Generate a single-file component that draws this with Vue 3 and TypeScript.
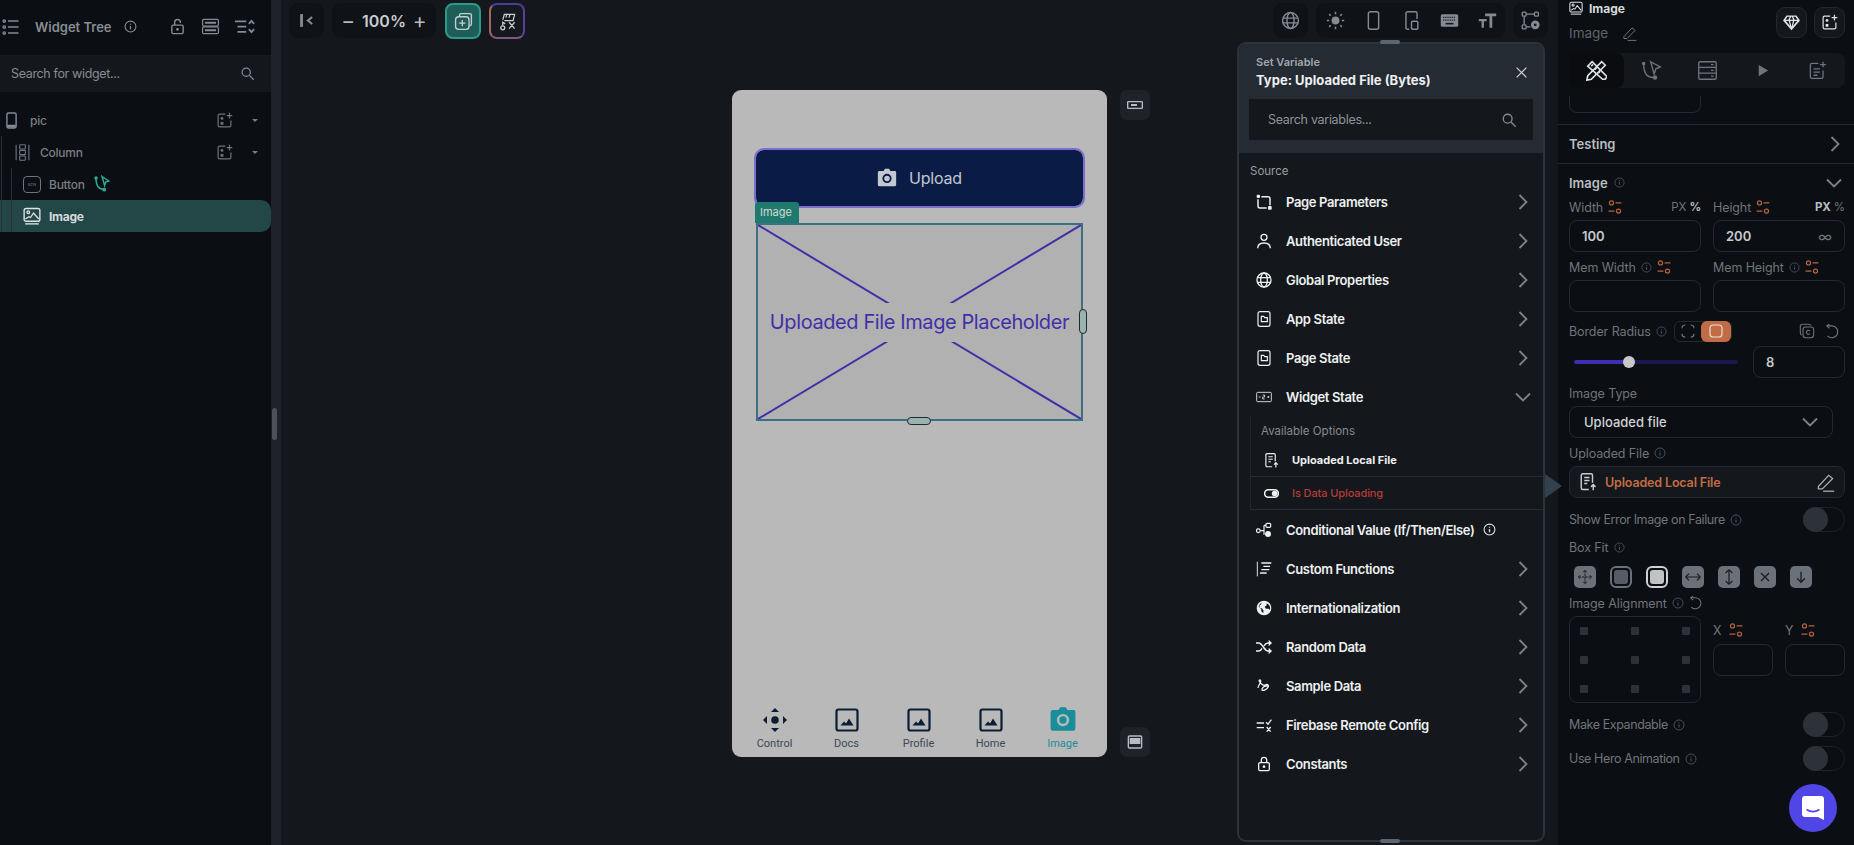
<script setup lang="ts">
const navItems = [
  { label: 'Docs', icon: 'navimg' },
  { label: 'Profile', icon: 'navimg' },
  { label: 'Home', icon: 'navimg' },
]
const sourcesTop = [
  { label: 'Page Parameters', icon: 'params' },
  { label: 'Authenticated User', icon: 'user' },
  { label: 'Global Properties', icon: 'globe' },
  { label: 'App State', icon: 'state' },
  { label: 'Page State', icon: 'state' },
]
const sourcesBottom = [
  { label: 'Custom Functions', icon: 'funcs' },
  { label: 'Internationalization', icon: 'intl' },
  { label: 'Random Data', icon: 'shuffle' },
  { label: 'Sample Data', icon: 'sample' },
  { label: 'Firebase Remote Config', icon: 'remote' },
  { label: 'Constants', icon: 'lockc' },
]
const fits = ['move', 'inner', 'inner', 'hz', 'vt', 'x', 'down']
const dots = Array.from({ length: 9 }, (_, i) => i)
</script>

<template>
  <div class="app">
    <svg class="sprite" width="0" height="0" aria-hidden="true">
      <defs>
        <symbol id="info" viewBox="0 0 24 24"><circle cx="12" cy="12" r="10" fill="none" stroke="currentColor" stroke-width="2"/><path d="M12 11v6M12 7v1.6" stroke="currentColor" stroke-width="2.4" fill="none"/></symbol>
        <symbol id="tree" viewBox="0 0 24 24"><g fill="none" stroke="currentColor" stroke-width="1.8"><circle cx="3" cy="4" r="1.6"/><circle cx="3" cy="12" r="1.6"/><circle cx="3" cy="20" r="1.6"/><path d="M8 4h14M8 12h14M8 20h14"/></g></symbol>
        <symbol id="lock" viewBox="0 0 24 24"><g fill="none" stroke="currentColor" stroke-width="2"><rect x="4" y="10" width="16" height="12" rx="2"/><path d="M8 10V6a4 4 0 0 1 8 0v1"/></g><circle cx="12" cy="16" r="2" fill="currentColor"/></symbol>
        <symbol id="lockc" viewBox="0 0 24 24"><g fill="none" stroke="currentColor" stroke-width="2"><rect x="4" y="10" width="16" height="12" rx="2"/><path d="M8 10V6a4 4 0 0 1 8 0v4"/></g><circle cx="12" cy="16" r="2" fill="currentColor"/></symbol>
        <symbol id="stack" viewBox="0 0 24 24"><g fill="none" stroke="currentColor" stroke-width="1.6"><rect x="2" y="3" width="20" height="8.4" rx="1.5"/><rect x="2" y="12.6" width="20" height="8.4" rx="1.5"/></g><path d="M5 6h14v2.5H5zM5 15.5h14V18H5z" fill="currentColor"/></symbol>
        <symbol id="sort" viewBox="0 0 24 24"><g fill="none" stroke="currentColor" stroke-width="2"><path d="M1 6h13M4 12h10M4 18h10M17 9l3-3.5L23 9M17 15l3 3.5 3-3.5"/></g></symbol>
        <symbol id="search" viewBox="0 0 24 24"><g fill="none" stroke="currentColor" stroke-width="2"><circle cx="10" cy="10" r="6.6"/><path d="M15 15l7 7"/></g></symbol>
        <symbol id="phone" viewBox="0 0 24 24"><rect x="5.5" y="1.5" width="13" height="21" rx="2" fill="none" stroke="currentColor" stroke-width="2"/><path d="M6 18h12v4H6z" fill="currentColor"/></symbol>
        <symbol id="addw" viewBox="0 0 24 24"><g fill="none" stroke="currentColor" stroke-width="1.7"><path d="M13 3H5a2 2 0 0 0-2 2v14a2 2 0 0 0 2 2h14a2 2 0 0 0 2-2v-7"/><path d="M19 1v8M15 5h8"/></g><g fill="currentColor"><rect x="6.5" y="7" width="4" height="4" rx="2"/><rect x="6.5" y="14" width="4" height="4" rx=".6"/></g></symbol>
        <symbol id="column" viewBox="0 0 24 24"><g fill="none" stroke="currentColor" stroke-width="1.6"><path d="M3 1v22M21 1v22"/><rect x="8" y="1" width="8" height="6" rx="1"/><rect x="8" y="9" width="8" height="6" rx="1"/><rect x="8" y="17" width="8" height="6" rx="1"/></g></symbol>
        <symbol id="img" viewBox="0 0 24 24"><g fill="none" stroke="currentColor" stroke-width="1.8"><rect x="1.5" y="2" width="21" height="17" rx="2.5"/><circle cx="7" cy="7" r="1.8"/><path d="M3 16l5-3 2 1 4-6 7 8"/><path d="M3 22.5h18"/></g></symbol>
        <symbol id="flow" viewBox="0 0 24 24"><g fill="none" stroke="currentColor" stroke-width="2"><path d="M4 4c0 9 2 15 10 15"/><path d="M12 2l9 6-4 1.5L15.5 14z"/></g><g fill="currentColor"><circle cx="4" cy="4" r="2.4"/><circle cx="15" cy="19.5" r="2.6"/></g></symbol>
        <symbol id="collapse" viewBox="0 0 24 24"><path d="M3 3h4v18H3z" fill="currentColor"/><path d="M20 7l-6 5 6 5" fill="none" stroke="currentColor" stroke-width="3"/></symbol>
        <symbol id="addpage" viewBox="0 0 24 24"><g fill="none" stroke="currentColor" stroke-width="1.7"><path d="M7 5V4a2 2 0 0 1 2-2h11a2 2 0 0 1 2 2v11a2 2 0 0 1-2 2h-1"/><rect x="2" y="6" width="17" height="16" rx="4"/><path d="M10.5 10v8M6.5 14h8"/></g></symbol>
        <symbol id="tools" viewBox="0 0 24 24"><g fill="none" stroke="currentColor" stroke-width="1.6"><path d="M6 10L8 3h13l-2 8H8"/><path d="M11 3l-1 4M15 3l-1 4"/><circle cx="6" cy="20" r="2.5"/><path d="M6 17v-4l3 2M14 13l7 8M21 13l-7 8"/></g></symbol>
        <symbol id="gl" viewBox="0 0 24 24"><g fill="none" stroke="currentColor" stroke-width="1.8"><circle cx="12" cy="12" r="10"/><ellipse cx="12" cy="12" rx="4.5" ry="10"/><path d="M2.5 9h19M2.5 15h19"/></g></symbol>
        <symbol id="sun" viewBox="0 0 24 24"><circle cx="12" cy="12" r="5" fill="currentColor"/><path d="M12 1v3M12 20v3M1 12h3M20 12h3M4 4l2 2M18 18l2 2M20 4l-2 2M6 18l-2 2" stroke="currentColor" stroke-width="2" fill="none"/></symbol>
        <symbol id="phone2" viewBox="0 0 24 24"><rect x="5.5" y="1" width="13" height="22" rx="2.5" fill="none" stroke="currentColor" stroke-width="1.8"/></symbol>
        <symbol id="tablet" viewBox="0 0 24 24"><g fill="none" stroke="currentColor" stroke-width="1.8"><path d="M9 23H7a2 2 0 0 1-2-2V3a2 2 0 0 1 2-2h10a2 2 0 0 1 2 2v7"/><rect x="12" y="13" width="8" height="10" rx="1.5"/></g></symbol>
        <symbol id="kbd" viewBox="0 0 24 24"><rect x="1" y="4" width="22" height="16" rx="2" fill="currentColor"/><path d="M4 8h16M4 11.5h16" stroke="#14181c" stroke-width="1.5" stroke-dasharray="1.5 1.2"/><path d="M7 16h10" stroke="#14181c" stroke-width="2"/></symbol>
        <symbol id="tt" viewBox="0 0 24 24"><path d="M1 10h10v3H7.5v8h-3v-8H1zM9 3h14v3.5h-5V21h-3.5V6.500H9z" fill="currentColor"/></symbol>
        <symbol id="graph" viewBox="0 0 24 24"><g fill="none" stroke="currentColor" stroke-width="1.7"><rect x="1.5" y="1.5" width="5" height="5" rx="1.5"/><rect x="17" y="1.5" width="5" height="5" rx="1.5"/><rect x="1.5" y="17.5" width="5" height="5" rx="1.5"/><path d="M7 4h10M4 7v10M7 20h5"/></g><circle cx="18" cy="17.5" r="5.5" fill="currentColor"/><circle cx="18" cy="17.5" r="1.8" fill="#14181c"/></symbol>
        <symbol id="minibar" viewBox="0 0 24 24"><rect x="1" y="7" width="22" height="10" rx="1" fill="none" stroke="currentColor" stroke-width="2"/><path d="M6 10.5h9v3H6z" fill="currentColor"/></symbol>
        <symbol id="minilap" viewBox="0 0 24 24"><rect x="2" y="3" width="20" height="18" rx="1.5" fill="none" stroke="currentColor" stroke-width="2"/><path d="M4 6h16v9H4z" fill="currentColor"/></symbol>
        <symbol id="camera" viewBox="0 0 24 24"><path fill-rule="evenodd" d="M8 3.5L9.5 1h5L16 3.5h6a2 2 0 0 1 1 1.5v15a2 2 0 0 1-2 2H3a2 2 0 0 1-2-2V5a2 2 0 0 1 2-1.5zM12 7a5.5 5.5 0 1 0 0 11 5.5 5.5 0 0 0 0-11zm0 2.2a3.3 3.3 0 1 1 0 6.6 3.3 3.3 0 0 1 0-6.6z" fill="currentColor"/></symbol>
        <symbol id="navimg" viewBox="0 0 24 24"><rect x="1.5" y="1.5" width="21" height="21" rx="2" fill="none" stroke="currentColor" stroke-width="2.2"/><path d="M5.5 17.5l3.5-4 2 2 3-5 4.5 7z" fill="currentColor"/></symbol>
        <symbol id="dpad" viewBox="0 0 24 24"><g fill="currentColor"><circle cx="12" cy="12" r="3.8"/><path d="M12 0l4 4H8zM12 24l-4-4h8zM0 12l4-4v8zM24 12l-4 4V8z"/></g></symbol>
        <symbol id="params" viewBox="0 0 24 24"><g fill="none" stroke="currentColor" stroke-width="2.2"><path d="M8 4h10a3 3 0 0 1 3 3v10"/><path d="M3 8v10a3 3 0 0 0 3 3h10"/></g><rect x="1" y="1" width="5" height="5" rx="1.5" fill="currentColor"/><rect x="18" y="18" width="5.500" height="5.500" rx="1" fill="currentColor"/></symbol>
        <symbol id="user" viewBox="0 0 24 24"><g fill="none" stroke="currentColor" stroke-width="2"><circle cx="12" cy="6.5" r="4.5"/><path d="M2.5 23c0-5 4-8 9.5-8s9.5 3 9.5 8"/></g></symbol>
        <symbol id="globe" viewBox="0 0 24 24"><g fill="none" stroke="currentColor" stroke-width="2"><circle cx="12" cy="12" r="10.5"/><ellipse cx="12" cy="12" rx="5" ry="10.5"/><path d="M2 8.5h20M2 15.5h20"/></g></symbol>
        <symbol id="state" viewBox="0 0 24 24"><g fill="none" stroke="currentColor" stroke-width="1.8"><rect x="3" y="1" width="18" height="22" rx="3"/><path d="M8 8h3.5l1.5 2h4v6H8z"/></g></symbol>
        <symbol id="counter" viewBox="0 0 24 24"><rect x="1" y="5" width="22" height="14" rx="1.5" fill="none" stroke="currentColor" stroke-width="1.3"/><path d="M4 12h3M10 9h3v3h-3v3h3M17 12h3M18.5 10.5v3" fill="none" stroke="currentColor" stroke-width="1.2"/></symbol>
        <symbol id="fileup" viewBox="0 0 24 24"><g fill="none" stroke="currentColor" stroke-width="1.9"><path d="M13 22H5a2 2 0 0 1-2-2V3a2 2 0 0 1 2-2h11a2 2 0 0 1 2 2v10"/><path d="M7 6h7M7 10h7M7 14h4M19 23v-7M16 18.5l3-3 3 3"/></g></symbol>
        <symbol id="toggle" viewBox="0 0 24 24"><rect x="1" y="6" width="22" height="12" rx="6" fill="none" stroke="currentColor" stroke-width="2.5"/><circle cx="17" cy="12" r="4.5" fill="currentColor"/></symbol>
        <symbol id="cond" viewBox="0 0 24 24"><g fill="none" stroke="currentColor" stroke-width="1.8"><circle cx="3.5" cy="13" r="2.8"/><rect x="15" y="2" width="7" height="6" rx="1.5"/><path d="M6 13h6M12 5h3M12 5v14"/></g><circle cx="18" cy="18" r="4.5" fill="currentColor"/></symbol>
        <symbol id="funcs" viewBox="0 0 24 24"><g fill="none" stroke="currentColor" stroke-width="2"><path d="M2 1v22" stroke-width="1.4"/><path d="M8 3h15M11 8h10M8 13h12M6 18h10"/></g></symbol>
        <symbol id="intl" viewBox="0 0 24 24"><path fill-rule="evenodd" d="M12 1a11 11 0 1 1 0 22 11 11 0 0 1 0-22zM4 10l4 4v3l3 3v-5l-3-3H6l-1-3 3-3V4a9 9 0 0 0-4 6zm12-5v3l-3 2 2 3h4l2 2a9 9 0 0 0-5-10z" fill="currentColor"/></symbol>
        <symbol id="shuffle" viewBox="0 0 24 24"><g fill="none" stroke="currentColor" stroke-width="2.3"><path d="M0 6h4c6 0 8 12 14 12h3M0 18h4c2.5 0 4-2 5-4M12 10c1.5-2 3-4 6-4h3"/></g><path d="M19 1l5 5-5 5zM19 13l5 5-5 5z" fill="currentColor"/></symbol>
        <symbol id="sample" viewBox="0 0 24 24"><path d="M3 15c0-4 5-8 4-11-.8-2-3-.5-2 1 2 3 6 8 10 5 2-1 5 1 3 4-2 3-7 6-9 4-1-2 3-6 6-6l4-1" fill="none" stroke="currentColor" stroke-width="2"/></symbol>
        <symbol id="remote" viewBox="0 0 24 24"><g fill="none" stroke="currentColor" stroke-width="2"><path d="M1 9h11M1 16h11M15 8l3 3 5-7M16 15l6 7M22 15l-6 7"/></g></symbol>
        <symbol id="close" viewBox="0 0 24 24"><path d="M3 3l18 18M21 3L3 21" fill="none" stroke="currentColor" stroke-width="2.3"/></symbol>
        <symbol id="chev" viewBox="0 0 10 16"><path d="M1.5 1l7 7-7 7" fill="none" stroke="currentColor" stroke-width="1.8"/></symbol>
        <symbol id="chevd" viewBox="0 0 16 10"><path d="M1 1.5l7 7 7-7" fill="none" stroke="currentColor" stroke-width="1.8"/></symbol>
        <symbol id="pencil" viewBox="0 0 24 24"><g fill="none" stroke="currentColor" stroke-width="1.6"><path d="M3 17L16 3l5 4L8 20H3z"/><path d="M9 23h14"/></g></symbol>
        <symbol id="gem" viewBox="0 0 24 24"><path fill-rule="evenodd" d="M5 2h14l5 7-12 14L0 9zM6.500 4L3.500 8h4l2-4zM14.500 4l2 4h4l-3-4zM11.500 4l-1.800 4h4.600l-1.800-4zM4 10l6 7-2-7zM10 10l2 8 2-8zM16 10l-2 7 6-7z" fill="currentColor"/></symbol>
        <symbol id="wrench" viewBox="0 0 24 24"><g fill="none" stroke="currentColor" stroke-width="1.9"><path d="M2 7l5-5 17 17-2 3h-3z"/><path d="M6 7l2-2M10 11l2-2M14 15l2-2"/><path d="M18 2l4 4L6 22l-5 1 1-5z"/></g></symbol>
        <symbol id="tflow" viewBox="0 0 24 24"><g fill="none" stroke="currentColor" stroke-width="1.6"><path d="M3 4c0 9 3 16 11 16"/><path d="M11 2l11 6-5 2-2 6z"/></g><g fill="currentColor"><circle cx="3" cy="4" r="2"/><circle cx="16" cy="20" r="2.5"/></g></symbol>
        <symbol id="servers" viewBox="0 0 24 24"><g fill="none" stroke="currentColor" stroke-width="1.5"><rect x="2" y="2" width="20" height="20" rx="1.5"/><path d="M2 8.5h20M2 15h20M16 5.3h3M16 11.8h3M16 18.5h3"/></g></symbol>
        <symbol id="play" viewBox="0 0 24 24"><path d="M6 3l15 9-15 9z" fill="currentColor"/></symbol>
        <symbol id="noteadd" viewBox="0 0 24 24"><g fill="none" stroke="currentColor" stroke-width="1.6"><path d="M13 3H5a2 2 0 0 0-2 2v15a2 2 0 0 0 2 2h12a2 2 0 0 0 2-2v-8"/><path d="M19 1v7M15.5 4.5h7M7 10h8M7 14h8M7 18h5"/></g></symbol>
        <symbol id="vars" viewBox="0 0 24 24"><g fill="none" stroke="currentColor" stroke-width="2"><circle cx="6" cy="5" r="3.5"/><circle cx="18" cy="19" r="3.5"/><path d="M13 5h10M1 19h10"/></g></symbol>
        <symbol id="corners" viewBox="0 0 24 24"><path d="M3 8a5 5 0 0 1 5-5M16 3a5 5 0 0 1 5 5M21 16a5 5 0 0 1-5 5M8 21a5 5 0 0 1-5-5" fill="none" stroke="currentColor" stroke-width="1.8"/></symbol>
        <symbol id="rr" viewBox="0 0 24 24"><rect x="3" y="3" width="18" height="18" rx="5" fill="none" stroke="currentColor" stroke-width="1.8"/></symbol>
        <symbol id="copyc" viewBox="0 0 24 24"><g fill="none" stroke="currentColor" stroke-width="1.6"><path d="M4 18a3 3 0 0 1-2-3V5a3 3 0 0 1 3-3h10a3 3 0 0 1 3 2"/><rect x="6" y="6" width="16" height="16" rx="4"/><path d="M16.5 12a3 3 0 1 0 0 4"/></g></symbol>
        <symbol id="undo" viewBox="0 0 24 24"><g fill="none" stroke="currentColor" stroke-width="1.8"><path d="M3 3h8a9.5 9.5 0 1 1-7 16"/><path d="M7 0L3 3l4 4"/></g></symbol>
        <symbol id="move" viewBox="0 0 24 24"><path d="M12 2v20M2 12h20M12 2L9 5M12 2l3 3M12 22l-3-3M12 22l3-3M2 12l3-3M2 12l3 3M22 12l-3-3M22 12l-3 3" fill="none" stroke="currentColor" stroke-width="1.5" stroke-dasharray="4 1"/></symbol>
        <symbol id="hz" viewBox="0 0 24 24"><path d="M1 12h22M1 12l5-5M1 12l5 5M23 12l-5-5M23 12l-5 5" fill="none" stroke="currentColor" stroke-width="1.8"/></symbol>
        <symbol id="vt" viewBox="0 0 24 24"><path d="M12 1v22M12 1L7 6M12 1l5 5M12 23l-5-5M12 23l5-5" fill="none" stroke="currentColor" stroke-width="1.8"/></symbol>
        <symbol id="x" viewBox="0 0 24 24"><path d="M6 6l12 12M18 6L6 18" fill="none" stroke="currentColor" stroke-width="2"/></symbol>
        <symbol id="down" viewBox="0 0 24 24"><path d="M12 4v16M6 14l6 6 6-6" fill="none" stroke="currentColor" stroke-width="2"/></symbol>
      </defs>
    </svg>

    <aside class="tree">
      <header class="tree-head">
        <svg class="i18 ic-a"><use href="#tree" /></svg>
        <span class="tree-title">Widget Tree</span>
        <svg class="i13 ic-a info-t"><use href="#info" /></svg>
        <svg class="i17 ic-a lock-t"><use href="#lock" /></svg>
        <svg class="i19 ic-a stack-t"><use href="#stack" /></svg>
        <svg class="i21 ic-a sort-t"><use href="#sort" /></svg>
      </header>
      <div class="tree-search">
        <span>Search for widget...</span>
        <svg class="i15 ic-a"><use href="#search" /></svg>
      </div>
      <div class="tree-list">
        <div class="trow r0">
          <svg class="i17 ic-a"><use href="#phone" /></svg>
          <span class="tname n0">pic</span>
          <svg class="i17 ic-b addw"><use href="#addw" /></svg>
          <i class="caret"></i>
        </div>
        <div class="trow r1">
          <svg class="i17 ic-b"><use href="#column" /></svg>
          <span class="tname n1">Column</span>
          <svg class="i17 ic-b addw"><use href="#addw" /></svg>
          <i class="caret"></i>
        </div>
        <div class="trow r2">
          <span class="btn-ico">BTN</span>
          <span class="tname">Button</span>
          <svg class="i18 teal flow-i"><use href="#flow" /></svg>
        </div>
        <div class="trow r2 active">
          <svg class="i18 white-i"><use href="#img" /></svg>
          <span class="tname bold">Image</span>
        </div>
        <i class="vl v1"></i>
        <i class="vl v2"></i>
      </div>
    </aside>

    <div class="gutter"><i class="grip"></i></div>

    <main class="canvas">
      <div class="toolbar">
        <div class="tb-group tb-collapse"><svg class="i17 ic-a"><use href="#collapse" /></svg></div>
        <div class="tb-group tb-zoom">
          <span class="pm">−</span><span class="pct">100%</span><span class="pm">+</span>
        </div>
        <div class="tb-square green"><svg class="i19 ic-c"><use href="#addpage" /></svg></div>
        <div class="tb-square grad"><svg class="i19 ic-c"><use href="#tools" /></svg></div>
        <div class="tb-spacer"></div>
        <div class="tb-group tb-one"><svg class="i19 ic-a"><use href="#gl" /></svg></div>
        <div class="tb-group tb-mid">
          <svg class="i19 ic-a"><use href="#sun" /></svg>
          <svg class="i19 ic-a"><use href="#phone2" /></svg>
          <svg class="i19 ic-a"><use href="#tablet" /></svg>
          <svg class="i19 ic-a"><use href="#kbd" /></svg>
          <svg class="i19 ic-a"><use href="#tt" /></svg>
        </div>
        <div class="tb-group tb-one"><svg class="i19 ic-a"><use href="#graph" /></svg></div>
      </div>

      <div class="stage">
        <section class="phone">
          <div class="up-btn">
            <svg class="i20"><use href="#camera" /></svg>
            <span>Upload</span>
          </div>
          <div class="img-box">
            <span class="img-tag">Image</span>
            <svg class="cross" viewBox="0 0 322 194" preserveAspectRatio="none">
              <path d="M0 0L322 194M322 0L0 194" stroke="#4030a8" stroke-width="2" fill="none" />
            </svg>
            <span class="ph-text">Uploaded File Image Placeholder</span>
            <i class="h-right"></i>
            <i class="h-bottom"></i>
          </div>
          <nav class="navbar">
            <div class="nav-item">
              <svg class="i24"><use href="#dpad" /></svg>
              <span>Control</span>
            </div>
            <div v-for="n in navItems" :key="n.label" class="nav-item">
              <svg class="i24"><use :href="'#' + n.icon" /></svg>
              <span>{{ n.label }}</span>
            </div>
            <div class="nav-item on">
              <svg class="i28"><use href="#camera" /></svg>
              <span>Image</span>
            </div>
          </nav>
        </section>
        <div class="side">
          <div class="side-btn"><svg class="i16"><use href="#minibar" /></svg></div>
          <div class="side-btn"><svg class="i16"><use href="#minilap" /></svg></div>
        </div>
      </div>

      <section class="popup">
        <i class="pop-grip top"></i>
        <i class="pop-grip bot"></i>
        <header class="pop-head">
          <div class="pop-titles">
            <div>
              <div class="pop-sub">Set Variable</div>
              <div class="pop-type">Type: Uploaded File (Bytes)</div>
            </div>
            <svg class="i13 ic-close"><use href="#close" /></svg>
          </div>
          <div class="pop-search">
            <span>Search variables...</span>
            <svg class="i16 ic-a"><use href="#search" /></svg>
          </div>
        </header>
        <div class="pop-body">
          <div class="src-label">Source</div>
          <div v-for="s in sourcesTop" :key="s.label" class="src">
            <svg class="i16"><use :href="'#' + s.icon" /></svg>
            <span>{{ s.label }}</span>
            <svg class="chev"><use href="#chev" /></svg>
          </div>
          <div class="src">
            <svg class="i16"><use href="#counter" /></svg>
            <span>Widget State</span>
            <svg class="chevd"><use href="#chevd" /></svg>
          </div>
          <div class="opts">
            <div class="opt-title">Available Options</div>
            <div class="opt first">
              <svg class="i15"><use href="#fileup" /></svg>
              <span>Uploaded Local File</span>
            </div>
            <div class="opt red">
              <svg class="i15 tog"><use href="#toggle" /></svg>
              <span>Is Data Uploading</span>
            </div>
          </div>
          <div class="src cond">
            <svg class="i16"><use href="#cond" /></svg>
            <span>Conditional Value (If/Then/Else)</span>
            <svg class="i13 cinfo"><use href="#info" /></svg>
          </div>
          <div v-for="s in sourcesBottom" :key="s.label" class="src">
            <svg class="i16"><use :href="'#' + s.icon" /></svg>
            <span>{{ s.label }}</span>
            <svg class="chev"><use href="#chev" /></svg>
          </div>
        </div>
      </section>
      <i class="pointer"></i>
    </main>

    <aside class="props">
      <header class="p-head">
        <div>
          <div class="p-kind"><svg class="i14 white-i"><use href="#img" /></svg><b>Image</b></div>
          <div class="p-name"><span>Image</span><svg class="i15 ic-b"><use href="#pencil" /></svg></div>
        </div>
        <div class="p-acts">
          <div class="p-act"><svg class="i17 white-i"><use href="#gem" /></svg></div>
          <div class="p-act"><svg class="i17 white-i"><use href="#addw" /></svg></div>
        </div>
      </header>
      <div class="tabs">
        <div class="tab on"><svg class="i21 white-i"><use href="#wrench" /></svg></div>
        <div class="tab"><svg class="i21 ic-b"><use href="#tflow" /></svg></div>
        <div class="tab"><svg class="i21 ic-b"><use href="#servers" /></svg></div>
        <div class="tab"><svg class="i15 ic-b"><use href="#play" /></svg></div>
        <div class="tab"><svg class="i19 ic-b"><use href="#noteadd" /></svg></div>
      </div>
      <div class="clip-in"></div>

      <div class="sec testing"><b>Testing</b><svg class="chev c2"><use href="#chev" /></svg></div>
      <div class="sec-img"><b>Image</b><svg class="i11 dim"><use href="#info" /></svg><svg class="chevd c3"><use href="#chevd" /></svg></div>

      <div class="two">
        <div class="lab-row h24">
          <span>Width</span><svg class="i14 orange"><use href="#vars" /></svg>
          <em class="unit"><span>PX</span> <b>%</b></em>
        </div>
        <div class="lab-row h24">
          <span>Height</span><svg class="i14 orange"><use href="#vars" /></svg>
          <em class="unit"><b>PX</b> <span>%</span></em>
        </div>
        <div class="inp val">100</div>
        <div class="inp val">200<span class="inf">∞</span></div>
        <div class="lab-row h28">
          <span>Mem Width</span><svg class="i11 dim"><use href="#info" /></svg><svg class="i14 orange"><use href="#vars" /></svg>
        </div>
        <div class="lab-row h28">
          <span>Mem Height</span><svg class="i11 dim"><use href="#info" /></svg><svg class="i14 orange"><use href="#vars" /></svg>
        </div>
        <div class="inp"></div>
        <div class="inp"></div>
      </div>

      <div class="lab-row h34">
        <span>Border Radius</span><svg class="i11 dim"><use href="#info" /></svg>
        <div class="seg">
          <span class="seg-a"><svg class="i16 ic-b"><use href="#corners" /></svg></span>
          <span class="seg-b"><svg class="i16"><use href="#rr" /></svg></span>
        </div>
        <svg class="i16 ic-b copy"><use href="#copyc" /></svg>
        <svg class="i15 ic-b undo"><use href="#undo" /></svg>
      </div>
      <div class="slider-row">
        <div class="slider"><i class="fill"></i><i class="knob"></i></div>
        <div class="inp val s8">8</div>
      </div>

      <div class="lab-row h28"><span>Image Type</span></div>
      <div class="inp select"><span>Uploaded file</span><svg class="chevd c4"><use href="#chevd" /></svg></div>

      <div class="lab-row h28"><span>Uploaded File</span><svg class="i12 dim"><use href="#info" /></svg></div>
      <div class="inp file">
        <svg class="i18 ic-c"><use href="#fileup" /></svg>
        <b>Uploaded Local File</b>
        <svg class="i19 ic-c pen"><use href="#pencil" /></svg>
      </div>

      <div class="lab-row tog-row first-tog">
        <span>Show Error Image on Failure</span><svg class="i12 dim"><use href="#info" /></svg>
        <div class="switch"><i></i></div>
      </div>
      <div class="lab-row h25"><span>Box Fit</span><svg class="i11 dim"><use href="#info" /></svg></div>
      <div class="fits">
        <div v-for="(f, i) in fits" :key="i" class="fit" :class="{ inner: i === 1 || i === 2, light: i === 2 }">
          <svg v-if="f !== 'inner'" class="i16"><use :href="'#' + f" /></svg>
          <i v-else></i>
        </div>
      </div>
      <div class="lab-row h28 al-row">
        <span>Image Alignment</span><svg class="i12 dim"><use href="#info" /></svg><svg class="i14 ic-b"><use href="#undo" /></svg>
      </div>
      <div class="align">
        <div class="align-grid"><i v-for="d in dots" :key="d"></i></div>
        <div class="xy">
          <div class="xy-col">
            <div class="lab-row xy-l"><span>X</span><svg class="i14 orange"><use href="#vars" /></svg></div>
            <div class="inp"></div>
          </div>
          <div class="xy-col">
            <div class="lab-row xy-l"><span>Y</span><svg class="i14 orange"><use href="#vars" /></svg></div>
            <div class="inp"></div>
          </div>
        </div>
      </div>
      <div class="lab-row tog-row make">
        <span>Make Expandable</span><svg class="i12 dim"><use href="#info" /></svg>
        <div class="switch"><i></i></div>
      </div>
      <div class="lab-row tog-row hero">
        <span>Use Hero Animation</span><svg class="i12 dim"><use href="#info" /></svg>
        <div class="switch"><i></i></div>
      </div>
      <div class="chat">
        <svg width="22" height="24" viewBox="0 0 22 24">
          <path d="M3 0h16a3 3 0 0 1 3 3v21l-6-3H3a3 3 0 0 1-3-3V3a3 3 0 0 1 3-3z" fill="#fff" />
          <path d="M4.5 13.5c4 2.5 9 2.5 13 0" stroke="#4f46e5" stroke-width="1.7" fill="none" />
        </svg>
      </div>
    </aside>
  </div>
</template>

<style>
html, body { margin: 0; padding: 0; background: #14181c; }
</style>

<style scoped>
.app {
  width: 1854px; height: 845px; display: flex; overflow: hidden;
  background: #14181c; color: #8c9298;
  font-family: Inter, "Liberation Sans", sans-serif; font-size: 12.5px;
}
.sprite { position: absolute; }
svg { flex: none; display: block; }
.i11 { width: 11px; height: 11px; } .i12 { width: 12px; height: 12px; }
.i13 { width: 13px; height: 13px; } .i14 { width: 14px; height: 14px; }
.i15 { width: 15px; height: 15px; } .i16 { width: 16px; height: 16px; }
.i17 { width: 17px; height: 17px; } .i18 { width: 18px; height: 18px; }
.i19 { width: 19px; height: 19px; } .i20 { width: 20px; height: 20px; }
.i21 { width: 21px; height: 21px; } .i24 { width: 24px; height: 24px; }
.i28 { width: 28px; height: 28px; }
.ic-a { color: #858b91; } .ic-b { color: #6f757b; } .ic-c { color: #c8ced2; }
.ic-close { color: #c8ccd0; }
.white-i { color: #dfe3e5; } .teal { color: #2fa98f; } .orange { color: #b8643d; }
.dim { color: #4a5056; }

/* left tree */
.tree { width: 271px; flex: none; background: #0b0e12; display: flex; flex-direction: column; }
.tree-head { height: 55px; display: flex; align-items: center; padding: 0 17px 2px 2px; box-sizing: border-box; }
.tree-title { margin-left: 15px; font-weight: 600; font-size: 13px; color: #878d93; white-space: nowrap; }
.info-t { margin-left: 12px; }
.lock-t { margin-left: 32px; }
.stack-t { margin-left: 15px; }
.sort-t { margin-left: 14px; }
.tree-search { height: 37px; background: #14181c; display: flex; align-items: center; justify-content: space-between; padding: 0 16px 0 11px; font-size: 12.5px; letter-spacing: -.35px; color: #868c92; }
.tree-list { position: relative; margin-top: 12px; }
.trow { height: 32px; display: flex; align-items: center; box-sizing: border-box; padding-right: 13px; }
.r0 { padding-left: 3px; }
.r1 { padding-left: 14px; }
.r2 { padding-left: 23px; }
.tname { margin-left: 8px; font-size: 12px; letter-spacing: -.25px; color: #787e84; font-weight: 500; }
.n0 { margin-left: 10px; }
.n1 { margin-left: 9px; }
.addw { margin-left: auto; }
.caret { width: 0; height: 0; margin-left: 19px; border: 3px solid transparent; border-top: 3px solid #767c82; border-bottom: 0; }
.btn-ico { width: 16px; height: 15px; border: 1px solid #6f757b; border-radius: 4px; font-size: 4px; text-align: center; line-height: 15px; color: #7d8389; }
.flow-i { margin-left: 8px; }
.active { background: #234747; border-radius: 0 10px 10px 0; }
.active .tname { color: #d5dadb; }
.bold { font-weight: 700; }
.vl { position: absolute; width: 1px; background: #2a3035; }
.v1 { left: 1px; top: 32px; bottom: 0; }
.v2 { left: 11px; top: 64px; bottom: 0; }

.gutter { width: 10px; flex: none; background: #1c2228; position: relative; }
.grip { position: absolute; left: 1px; top: 408px; width: 5px; height: 32px; border-radius: 3px; background: #4b5158; }

/* canvas */
.canvas { flex: 1; min-width: 0; position: relative; background: #14181c; }
.toolbar { height: 42px; box-sizing: border-box; padding: 3px 10px 0 8px; display: flex; align-items: flex-start; }
.tb-group { height: 35px; background: #0f1216; border-radius: 9px; display: flex; align-items: center; justify-content: center; box-sizing: border-box; }
.tb-collapse { width: 35px; }
.tb-zoom { width: 104px; margin-left: 8px; justify-content: space-around; padding: 0 6px; color: #c4c8cb; }
.pm { font-size: 21px; font-weight: 400; color: #b5babe; line-height: 1; }
.pct { font-size: 16px; font-weight: 600; color: #c8cccf; }
.tb-square { width: 36px; height: 36px; box-sizing: border-box; border-radius: 8px; margin-left: 9px; display: flex; align-items: center; justify-content: center; }
.green { background: #1f5d58; border: 2px solid #2a9a8a; }
.grad { background: #15181c; border: 2px solid; border-color: #4a3a9e #5a3fa0 #7e5a7e #a8655f; margin-left: 8px; }
.tb-spacer { flex: 1; }
.tb-one { width: 35px; }
.tb-mid { width: 189px; margin: 0 8px; justify-content: space-between; padding: 0 8px 0 10px; }

.stage { display: flex; padding-left: 451px; margin-top: 48px; }
.phone { width: 375px; height: 667px; background: #b9b9b9; border-radius: 9px; display: flex; flex-direction: column; box-sizing: border-box; padding: 60px 24px 0; }
.up-btn { height: 56px; flex: none; background: #0a1c45; border-radius: 8px; outline: 2px solid #7a6cd0; display: flex; align-items: center; justify-content: center; gap: 12px; color: #c3c7d0; font-size: 16px; letter-spacing: -.2px; }
.img-box { position: relative; height: 198px; flex: none; margin-top: 17px; box-sizing: border-box; border: 2px solid #3c7085; background: #b1b1b2; display: flex; align-items: center; justify-content: center; }
.img-tag { position: absolute; left: -3px; top: -23px; width: 44px; height: 21px; box-sizing: border-box; padding-left: 5px; background: #1f7a6d; color: #d3d8d4; font-size: 11px; line-height: 21px; border-radius: 3px 3px 0 0; }
.cross { position: absolute; inset: 0; width: 100%; height: 100%; }
.ph-text { position: relative; width: 100%; height: 39px; line-height: 39px; text-align: center; background: #b1b1b2; color: #4030a8; font-size: 20px; white-space: nowrap; letter-spacing: -.4px; }
.h-right { position: absolute; right: -6px; top: 84px; width: 8px; height: 25px; box-sizing: border-box; background: #9ab3ae; border: 1px solid #1f2b2b; border-radius: 4px; }
.h-bottom { position: absolute; left: 149px; bottom: -6px; width: 24px; height: 8px; box-sizing: border-box; background: #9ab3ae; border: 1px solid #1f2b2b; border-radius: 4px; }
.navbar { margin: auto -15.5px 0 -17.5px; height: 57px; display: flex; }
.nav-item { flex: 1; display: flex; flex-direction: column; align-items: center; color: #0b1e36; height: 57px; }
.nav-item svg { height: 26px; margin-top: 7px; }
.nav-item span { font-family: Roboto, sans-serif; font-size: 11px; color: #3c4857; margin-top: 3px; line-height: 15px; }
.nav-item.on { color: #1a8d9b; }
.nav-item.on svg { margin-top: 6px; height: 27px; }
.nav-item.on span { color: #1a8d9b; }
.side { margin-left: 13px; display: flex; flex-direction: column; justify-content: space-between; height: 667px; }
.side-btn { width: 30px; height: 30px; background: #1f2329; border-radius: 7px; display: flex; align-items: center; justify-content: center; color: #b8bcc0; }

/* popup */
.popup { position: absolute; left: 956px; top: 42px; width: 308px; height: 800px; box-sizing: border-box; border: 2px solid #2c333a; border-radius: 9px; background: #14181c; display: flex; flex-direction: column; }
.pop-grip { position: absolute; left: 141px; width: 20px; height: 4px; background: #5c6670; border-radius: 2px; }
.pop-grip.top { top: -4px; }
.pop-grip.bot { bottom: -3px; }
.pop-head { height: 109px; flex: none; background: #252b33; border-radius: 7px 7px 0 0; box-sizing: border-box; padding: 6px 10px 0; }
.pop-titles { display: flex; justify-content: space-between; align-items: center; padding: 0 5px 0 7px; height: 45px; }
.pop-sub { font-size: 11px; font-weight: 600; color: #a0a7ae; line-height: 15px; }
.pop-type { font-size: 13px; font-weight: 700; color: #eef0f1; line-height: 20px; }
.pop-search { height: 41px; margin-top: 4px; background: #14181c; display: flex; align-items: center; justify-content: space-between; padding: 0 16px 0 19px; font-size: 12.5px; letter-spacing: -.3px; color: #8d9399; }
.pop-body { flex: 1; }
.src-label { height: 29px; padding: 10px 0 0 11px; box-sizing: border-box; font-size: 11.5px; line-height: 17px; color: #989ea4; }
.src { height: 39px; display: flex; align-items: center; padding: 0 15px 0 17px; color: #eef0f1; font-weight: 600; font-size: 13px; letter-spacing: -.35px; }
.src > span { margin-left: 14px; white-space: nowrap; }
.chev { width: 10px; height: 16px; color: #7d8389; margin-left: auto; }
.chevd { width: 16px; height: 10px; color: #7d8389; margin-left: auto; }
.src .chevd { margin-right: -3px; }
.cinfo { margin-left: 8px; color: #dfe3e5; }
.opts { margin-left: 11px; border-left: 1px solid #22282e; height: 94px; }
.opt-title { height: 28px; padding: 8px 0 0 10px; box-sizing: border-box; font-size: 11.5px; line-height: 14px; color: #858b91; }
.opt { height: 33px; display: flex; align-items: center; padding-left: 13px; color: #eef0f1; font-weight: 700; font-size: 11px; border-bottom: 1px solid #262c32; box-sizing: border-box; }
.opt span { margin-left: 13px; white-space: nowrap; }
.opt.red span { color: #b83a3a; font-weight: 500; font-size: 11px; letter-spacing: -.1px; }
.pointer { position: absolute; z-index: 2; left: 1264px; top: 474px; width: 0; height: 0; border: 12px solid transparent; border-left: 17px solid #33414f; border-right: 0; }

/* props */
.props { width: 296px; flex: none; box-sizing: border-box; padding: 0 9px 0 11px; background: #0b0e12; position: relative; }
.p-head { height: 53px; display: flex; justify-content: space-between; }
.p-kind { display: flex; align-items: center; height: 16px; gap: 6px; color: #d5dadb; font-size: 12px; }
.p-name { display: flex; align-items: center; gap: 14px; margin-top: 8px; height: 18px; font-size: 13.5px; color: #5f656b; }
.p-acts { display: flex; gap: 7px; margin-top: 7px; }
.p-act { width: 31px; height: 31px; box-sizing: border-box; background: #14181c; border: 1px solid #22282e; border-radius: 9px; display: flex; align-items: center; justify-content: center; }
.tabs { height: 35px; display: flex; background: #14181c; border-radius: 8px; }
.tab { flex: 1; display: flex; align-items: center; justify-content: center; border-radius: 8px; }
.tab.on { background: #0a0c0f; }
.clip-in { width: 132px; height: 17px; margin-top: 8px; box-sizing: border-box; border: 1px solid #24292f; border-top: 0; border-radius: 0 0 8px 8px; }
.sec { height: 40px; margin: 10px -9px 0 -11px; padding: 0 14px 0 11px; border-top: 1px solid #24292f; border-bottom: 1px solid #24292f; box-sizing: border-box; display: flex; align-items: center; justify-content: space-between; font-size: 13px; color: #b8bdc1; }
.testing { margin-top: 11px; height: 40px; }
.sec b { font-weight: 600; }
.c2 { margin-left: auto; }
.sec-img { height: 30px; box-sizing: border-box; padding-top: 7px; display: flex; align-items: center; gap: 6px; color: #b8bdc1; font-size: 13px; }
.sec-img b { font-weight: 600; }
.c3 { margin-right: 3px; }
.two { display: grid; grid-template-columns: 132px 132px; column-gap: 12px; }
.lab-row { display: flex; align-items: center; gap: 5px; color: #6f757b; font-size: 12.5px; white-space: nowrap; letter-spacing: -.1px; box-sizing: border-box; }
.h24 { height: 26px; }
.h28 { height: 28px; padding-top: 2px; }
.h34 { height: 34px; padding-top: 4px; }
.h25 { height: 25px; margin-top: 3px; }
.unit { margin-left: auto; font-style: normal; font-size: 11.5px; }
.unit b { color: #b8bdc1; font-weight: 700; }
.inp { height: 32px; box-sizing: border-box; border: 1px solid #24292f; border-radius: 8px; display: flex; align-items: center; position: relative; }
.val { padding-left: 12px; color: #c6cacd; font-weight: 600; font-size: 13px; }
.inf { position: absolute; right: 12px; color: #6f757b; font-weight: 400; font-size: 15px; }
.seg { display: flex; margin-left: 2px; height: 21px; border: 1px solid #24292f; border-radius: 6px; width: 58px; box-sizing: border-box; }
.seg-a { width: 27px; display: flex; align-items: center; justify-content: center; }
.seg-b { width: 31px; height: 21px; margin-top: -1px; background: #c26c45; border-radius: 6px; display: flex; align-items: center; justify-content: center; color: #eadfd9; }
.copy { margin-left: auto; }
.undo { margin: 0 5px 0 5px; }
.slider-row { display: flex; justify-content: space-between; align-items: center; height: 32px; }
.slider { position: relative; width: 164px; height: 4px; margin-left: 5px; background: #1a1850; border-radius: 2px; }
.fill { position: absolute; left: 0; top: 0; height: 4px; width: 55px; background: #3a2fb0; border-radius: 2px; }
.knob { position: absolute; left: 49px; top: -4px; width: 12px; height: 12px; border-radius: 50%; background: #c8c8c8; }
.s8 { width: 92px; }
.select { width: 264px; padding: 0 14px; justify-content: space-between; color: #cfd3d6; font-size: 13px; font-weight: 500; }
.file { background: #14181c; padding: 0 9px; color: #c26c45; font-size: 12.5px; }
.file b { margin-left: 8px; font-weight: 600; letter-spacing: -.15px; }
.pen { margin-left: auto; color: #a8adb2; }
.tog-row { position: relative; letter-spacing: -.4px; }
.first-tog { height: 25px; margin-top: 9px; }
.switch { margin-left: auto; width: 42px; height: 25px; box-sizing: border-box; border: 1px solid #1e2328; border-radius: 13px; position: relative; }
.switch i { position: absolute; left: -1px; top: -1px; width: 25px; height: 25px; border-radius: 50%; background: #2d3238; }
.fits { display: flex; gap: 14px; padding-left: 5px; height: 22px; margin-top: 6px; }
.fit { width: 22px; height: 22px; border-radius: 5px; background: #6b7178; display: flex; align-items: center; justify-content: center; color: #1b1f24; box-sizing: border-box; }
.fit.inner { border-radius: 6px; border: 2px solid #6b7178; background: #0b0e12; }
.fit.inner i { width: 14px; height: 14px; border-radius: 3px; background: #565c66; }
.fit.light { border-color: #cfd0d0; }
.fit.light i { background: #c0c2c4; }
.align { display: flex; gap: 12px; height: 87px; }
.align-grid { width: 132px; height: 87px; box-sizing: border-box; border: 1px solid #24292f; border-radius: 8px; display: grid; grid-template-columns: repeat(3, 8px); grid-template-rows: repeat(3, 8px); justify-content: space-between; align-content: space-between; padding: 10px 10px 9px; }
.align-grid i { background: #2d3238; border-radius: 1px; }
.xy { display: flex; gap: 12px; }
.xy-col { width: 60px; }
.xy-l { height: 28px; gap: 8px; }
.make { margin-top: 9px; height: 25px; }
.hero { margin-top: 9px; height: 25px; }
.chat { position: absolute; right: 17px; bottom: 13px; width: 48px; height: 48px; border-radius: 50%; background: #4f46e5; display: flex; align-items: center; justify-content: center; }
</style>
